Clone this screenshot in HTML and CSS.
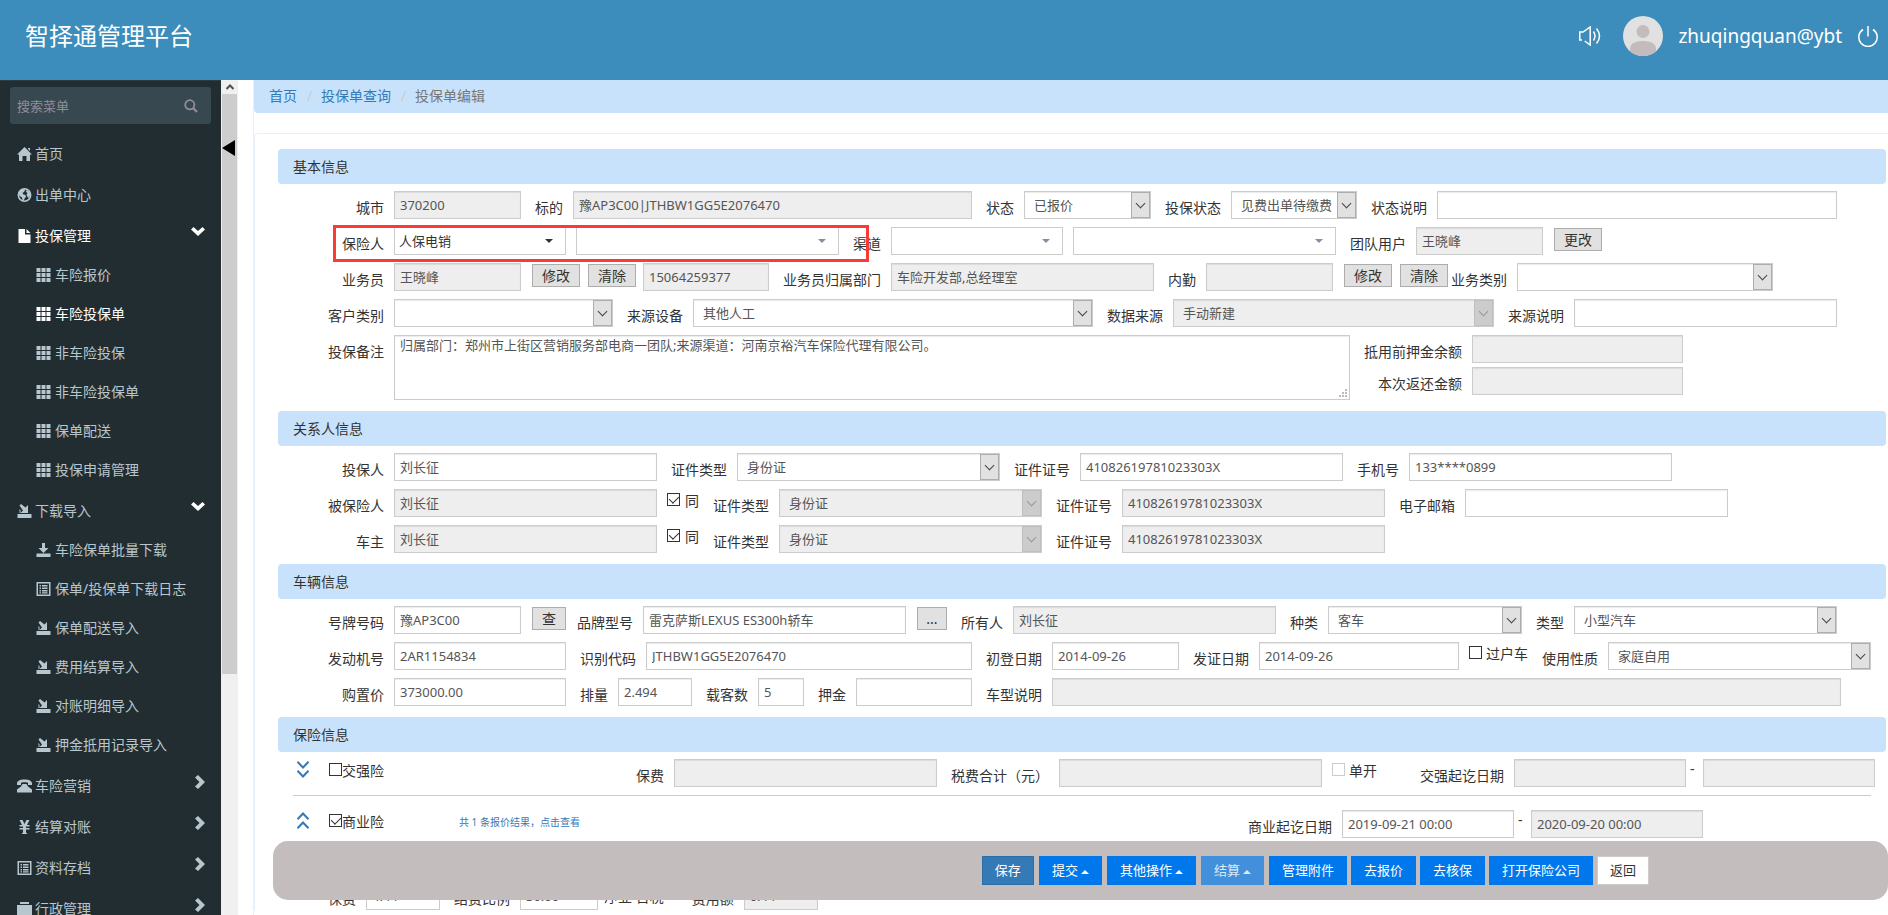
FILE: index.html
```html
<!DOCTYPE html>
<html lang="zh-CN">
<head>
<meta charset="utf-8">
<title>智择通管理平台</title>
<link rel="stylesheet" href="styles.css">
</head>
<body>
<svg class="sprite" aria-hidden="true">
  <symbol id="i-home" viewBox="0 0 15 14"><path d="M7.500 0L15 7.500h-2V14H9.500V9h-4v5H2V7.500H0L7.500 0zM11 1h2v3l-2-2z"/></symbol>
  <symbol id="i-globe" viewBox="0 0 14 14"><circle cx="7" cy="7" r="6.200" fill="none" stroke="currentColor" stroke-width="1.500"/><path d="M2 3l3-2 3 .5L6.500 4 5 5l1 1.500 2 .5.5 2L7 10.500 6.500 13 5 12 4.500 9.500 2 8 1 5zM9 2l3 2 .8 3-1.300 3-1.500-1L9 6.500 10 5 8.500 4z"/></symbol>
  <symbol id="i-file" viewBox="0 0 12 14"><path d="M0 0h6.500v5.500H12V14H0zM8 0l4 4H8z"/></symbol>
  <symbol id="i-grid" viewBox="0 0 14 14"><path d="M0 0h4v4H0zM5 0h4v4H5zM10 0h4v4h-4zM0 5h4v4H0zM5 5h4v4H5zM10 5h4v4h-4zM0 10h4v4H0zM5 10h4v4H5zM10 10h4v4h-4z"/></symbol>
  <symbol id="i-import" viewBox="0 0 14 14"><path d="M0 10h14v4H0zM2 1.500L3.500 0l4.500 3.500L10.500 1v8H3l2.500-2.500zM2 5v4h1V6z"/></symbol>
  <symbol id="i-download" viewBox="0 0 14 14"><path d="M5.500 0h3v5H12L7 10 2 5h3.500zM0 10.500h14V14H0z"/></symbol>
  <symbol id="i-list" viewBox="0 0 14 14"><path fill-rule="evenodd" d="M0 0h14v14H0zM1.500 1.500v11h11v-11zM3 3h1.500v1.500H3zM5.500 3H11v1.500H5.500zM3 5.500h1.500V7H3zM5.500 5.500H11V7H5.500zM3 8h1.500v1.500H3zM5.500 8H11v1.500H5.500zM3 10.200h1.500v1.300H3zM5.500 10.200H11v1.300H5.500z"/></symbol>
  <symbol id="i-phone" viewBox="0 0 15 13"><path d="M0 4C0 1.500 3 0 7.500 0S15 1.500 15 4v1.500h-4V3.200C9 2.600 6 2.600 4 3.200v2.300H0zM5.500 4.500h4L11 7l4 3v3H0v-3l4-3z"/></symbol>
  <symbol id="i-yen" viewBox="0 0 12 14"><path d="M1 0h3l2 4 2-4h3L8.500 5H11v1.500H7.500v1.500H11v1.500H7.500v3L9 14H3l1.500-1.500v-3H1V8h3.500V6.500H1V5h2.500z"/></symbol>
  <symbol id="i-case" viewBox="0 0 15 14"><path d="M3 0h9v2H3zM0 3h15v11H0z"/></symbol>
  <symbol id="i-search" viewBox="0 0 14 14"><circle cx="5.800" cy="5.800" r="4.600" fill="none" stroke="currentColor" stroke-width="1.800"/><path d="M9 9l4 4" stroke="currentColor" stroke-width="2.200"/></symbol>
  <symbol id="i-down" viewBox="0 0 14 9"><path d="M2.500 0L7 4l4.500-4L14 2.500 7 9 0 2.500z"/></symbol>
  <symbol id="i-right" viewBox="0 0 10 14"><path d="M3 0l7 7-7 7-3-2.500L4.500 7 0 2.500z"/></symbol>
  <symbol id="i-double" viewBox="0 0 12 17"><path d="M.5.800L6 6.500 11.500.800M.500 9.800L6 15.500l5.500-5.700" fill="none" stroke="currentColor" stroke-width="2"/></symbol>
</svg>

<header class="header">
  <h1 class="brand">智择通管理平台</h1>
  <div class="account">
    <svg class="speaker" viewBox="0 0 22 20"><path d="M3 14H.8V6H4l7.200-5v18l-5.500-4M14.500 5.500q3 4.500 0 9M17.500 2.500q6 7.500 0 15" fill="none" stroke="#fff" stroke-width="1.500"/></svg>
    <svg class="avatar" viewBox="0 0 40 40"><clipPath id="round"><circle cx="20" cy="20" r="20"/></clipPath><g clip-path="url(#round)"><path fill="#e1e1e1" d="M0 0h40v40H0z"/><circle cx="20" cy="15.500" r="6.500" fill="#c4bcbc"/><path fill="#c4bcbc" d="M7 40v-7q0-8 13-8t13 8v7z"/></g></svg>
    <span class="user">zhuqingquan@ybt</span>
    <svg class="power" viewBox="0 0 20 21"><path d="M5 3.500a9.200 9.200 0 1 0 10 0M10 0v10.500" fill="none" stroke="#fff" stroke-width="1.500"/></svg>
  </div>
</header>

<div class="page">
  <aside class="sidebar">
    <form class="search">
      <input type="text" placeholder="搜索菜单" aria-label="搜索菜单">
      <button type="button" aria-label="搜索"><svg><use href="#i-search"/></svg></button>
    </form>
    <nav class="menu">
      <a href="#"><svg class="ic"><use href="#i-home"/></svg>首页</a>
      <a href="#"><svg class="ic"><use href="#i-globe"/></svg>出单中心</a>
      <a href="#" class="head on"><svg class="ic"><use href="#i-file"/></svg>投保管理<svg class="arrow"><use href="#i-down"/></svg></a>
      <div class="sub">
        <a href="#"><svg class="ic"><use href="#i-grid"/></svg>车险报价</a>
        <a href="#" class="on"><svg class="ic"><use href="#i-grid"/></svg>车险投保单</a>
        <a href="#"><svg class="ic"><use href="#i-grid"/></svg>非车险投保</a>
        <a href="#"><svg class="ic"><use href="#i-grid"/></svg>非车险投保单</a>
        <a href="#"><svg class="ic"><use href="#i-grid"/></svg>保单配送</a>
        <a href="#"><svg class="ic"><use href="#i-grid"/></svg>投保申请管理</a>
      </div>
      <a href="#" class="head"><svg class="ic"><use href="#i-import"/></svg>下载导入<svg class="arrow"><use href="#i-down"/></svg></a>
      <div class="sub">
        <a href="#"><svg class="ic"><use href="#i-download"/></svg>车险保单批量下载</a>
        <a href="#"><svg class="ic"><use href="#i-list"/></svg>保单/投保单下载日志</a>
        <a href="#"><svg class="ic"><use href="#i-import"/></svg>保单配送导入</a>
        <a href="#"><svg class="ic"><use href="#i-import"/></svg>费用结算导入</a>
        <a href="#"><svg class="ic"><use href="#i-import"/></svg>对账明细导入</a>
        <a href="#"><svg class="ic"><use href="#i-import"/></svg>押金抵用记录导入</a>
      </div>
      <a href="#"><svg class="ic"><use href="#i-phone"/></svg>车险营销<svg class="arrow"><use href="#i-right"/></svg></a>
      <a href="#"><svg class="ic"><use href="#i-yen"/></svg>结算对账<svg class="arrow"><use href="#i-right"/></svg></a>
      <a href="#"><svg class="ic"><use href="#i-list"/></svg>资料存档<svg class="arrow"><use href="#i-right"/></svg></a>
      <a href="#"><svg class="ic"><use href="#i-case"/></svg>行政管理<svg class="arrow"><use href="#i-right"/></svg></a>
    </nav>
  </aside>
  <div class="scrollbar">
    <svg class="up" viewBox="0 0 8 6"><path d="M.5 5L4 1.500 7.500 5" fill="none" stroke="#505050" stroke-width="2"/></svg>
    <div class="thumb"></div>
    <button type="button" class="collapse" aria-label="收起菜单"></button>
  </div>

  <main class="main">
    <nav class="crumbs">
      <a href="#">首页</a><i>/</i><a href="#">投保单查询</a><i>/</i><span>投保单编辑</span>
    </nav>
    <form class="panel">
      <h2 class="bar">基本信息</h2>
      <div class="rows">
        <div class="row">
          <label for="city">城市</label><input id="city" class="w1" value="370200" readonly>
          <label for="subject">标的</label><input id="subject" class="w-subject" value="豫AP3C00|JTHBW1GG5E2076470" readonly>
          <label for="state">状态</label><span class="select w1"><select id="state"><option>已报价</option></select></span>
          <label for="istate">投保状态</label><span class="select w-short"><select id="istate"><option>见费出单待缴费</option></select></span>
          <label for="snote">状态说明</label><input id="snote" class="w4">
        </div>
        <div class="row">
          <label for="insurer">保险人</label><span class="combo w2 dark"><select id="insurer"><option>人保电销</option></select></span>
          <span class="combo w3"><select aria-label="保险人机构"><option></option></select></span>
          <label for="channel">渠道</label><span class="combo w2"><select id="channel"><option></option></select></span>
          <span class="combo w3"><select aria-label="渠道机构"><option></option></select></span>
          <label for="team">团队用户</label><input id="team" class="w1" value="王晓峰" readonly>
          <button type="button">更改</button>
          <div class="marker"></div>
        </div>
        <div class="row">
          <label for="agent">业务员</label><input id="agent" class="w1" value="王晓峰" readonly>
          <button type="button">修改</button><button type="button">清除</button>
          <input class="w-short" aria-label="业务员电话" value="15064259377" readonly>
          <label for="dept">业务员归属部门</label><input id="dept" class="w3" value="车险开发部,总经理室" readonly>
          <label for="clerk">内勤</label><input id="clerk" class="w1" readonly>
          <button type="button">修改</button><button type="button">清除</button>
          <label for="btype" class="snug">业务类别</label><span class="select w-btype"><select id="btype"><option></option></select></span>
        </div>
        <div class="row">
          <label for="ctype">客户类别</label><span class="select w-ctype"><select id="ctype"><option></option></select></span>
          <label for="device">来源设备</label><span class="select w4"><select id="device"><option>其他人工</option></select></span>
          <label for="source">数据来源</label><span class="select w-source"><select id="source" disabled><option>手动新建</option></select></span>
          <label for="srcnote">来源说明</label><input id="srcnote" class="w3">
        </div>
        <div class="row">
          <label for="remark">投保备注</label><textarea id="remark">归属部门：郑州市上街区营销服务部电商一团队;来源渠道：河南京裕汽车保险代理有限公司。</textarea>
          <div class="stack">
            <div class="row"><label for="dep1">抵用前押金余额</label><input id="dep1" class="w-dep" readonly></div>
            <div class="row"><label for="dep2">本次返还金额</label><input id="dep2" class="w-dep" readonly></div>
          </div>
        </div>
      </div>

      <h2 class="bar">关系人信息</h2>
      <div class="rows">
        <div class="row">
          <label for="holder">投保人</label><input id="holder" class="w3" value="刘长征">
          <label for="hct">证件类型</label><span class="select w3"><select id="hct"><option>身份证</option></select></span>
          <label for="hcn">证件证号</label><input id="hcn" class="w3" value="41082619781023303X">
          <label for="mobile">手机号</label><input id="mobile" class="w3" value="133****0899">
        </div>
        <div class="row">
          <label for="insured">被保险人</label><input id="insured" class="w3" value="刘长征" readonly>
          <span class="check same"><input type="checkbox" id="same1" checked><label for="same1">同</label></span>
          <label for="ict">证件类型</label><span class="select w3"><select id="ict" disabled><option>身份证</option></select></span>
          <label for="icn">证件证号</label><input id="icn" class="w3" value="41082619781023303X" readonly>
          <label for="email">电子邮箱</label><input id="email" class="w3">
        </div>
        <div class="row">
          <label for="owner">车主</label><input id="owner" class="w3" value="刘长征" readonly>
          <span class="check same"><input type="checkbox" id="same2" checked><label for="same2">同</label></span>
          <label for="oct">证件类型</label><span class="select w3"><select id="oct" disabled><option>身份证</option></select></span>
          <label for="ocn">证件证号</label><input id="ocn" class="w3" value="41082619781023303X" readonly>
        </div>
      </div>

      <h2 class="bar">车辆信息</h2>
      <div class="rows">
        <div class="row">
          <label for="plate">号牌号码</label><input id="plate" class="w1" value="豫AP3C00">
          <button type="button" class="lookup">查</button>
          <label for="model" class="tight">品牌型号</label><input id="model" class="w3" value="雷克萨斯LEXUS ES300h轿车">
          <button type="button" class="more">...</button>
          <label for="own">所有人</label><input id="own" class="w3" value="刘长征" readonly>
          <label for="kind">种类</label><span class="select w-kind"><select id="kind"><option>客车</option></select></span>
          <label for="type">类型</label><span class="select w3"><select id="type"><option>小型汽车</option></select></span>
        </div>
        <div class="row">
          <label for="engine">发动机号</label><input id="engine" class="w2" value="2AR1154834">
          <label for="vin">识别代码</label><input id="vin" class="w-vin" value="JTHBW1GG5E2076470">
          <label for="reg">初登日期</label><input id="reg" class="w1" value="2014-09-26">
          <label for="issue">发证日期</label><input id="issue" class="w-issue" value="2014-09-26">
          <span class="check"><input type="checkbox" id="transfer"><label for="transfer">过户车</label></span>
          <label for="usage">使用性质</label><span class="select w3"><select id="usage"><option>家庭自用</option></select></span>
        </div>
        <div class="row">
          <label for="price">购置价</label><input id="price" class="w2" value="373000.00">
          <label for="disp">排量</label><input id="disp" class="w0" value="2.494">
          <label for="seats">载客数</label><input id="seats" class="w-seats" value="5">
          <label for="deposit">押金</label><input id="deposit" class="w-deposit">
          <label for="mnote">车型说明</label><input id="mnote" class="w-mnote" readonly>
        </div>
      </div>

      <h2 class="bar">保险信息</h2>
      <div class="cover">
        <div class="row">
          <div class="lead">
            <a href="#" class="fold" aria-label="展开"><svg><use href="#i-double"/></svg></a>
            <span class="check"><input type="checkbox" id="ctp"><label for="ctp">交强险</label></span>
          </div>
          <label for="prem">保费</label><input id="prem" class="w3" readonly>
          <label for="tax">税费合计（元）</label><input id="tax" class="w3" readonly>
          <span class="check single"><input type="checkbox" id="single" disabled><label for="single">单开</label></span>
          <label for="c1">交强起讫日期</label><input id="c1" class="w2" readonly><span class="dash">-</span><input class="w2" aria-label="交强止期" readonly>
        </div>
        <hr>
        <div class="row">
          <div class="lead long">
            <a href="#" class="fold up" aria-label="收起"><svg><use href="#i-double"/></svg></a>
            <span class="check"><input type="checkbox" id="com" checked><label for="com">商业险</label></span>
            <a href="#" class="quote">共 1 条报价结果，点击查看</a>
          </div>
          <label for="b1">商业起讫日期</label><input id="b1" class="w2" value="2019-09-21 00:00"><span class="dash">-</span><input class="w2" aria-label="商业止期" value="2020-09-20 00:00" readonly>
        </div>
        <div class="row fees">
          <label for="fee1">保费</label><input id="fee1" class="w0" value="4.44">
          <label for="fee2">结费比例</label><input id="fee2" class="w-rate" value="30.00">
          <span class="note">净业 含税</span>
          <label for="fee3">费用额</label><input id="fee3" class="w0" value="0.44" readonly>
        </div>
      </div>
    </form>
  </main>
</div>

<div class="actions">
  <button type="button" class="save">保存</button>
  <button type="button">提交<i class="caret"></i></button>
  <button type="button">其他操作<i class="caret"></i></button>
  <button type="button" disabled>结算<i class="caret"></i></button>
  <div class="plain">
    <button type="button">管理附件</button>
    <button type="button">去报价</button>
    <button type="button">去核保</button>
    <button type="button">打开保险公司</button>
    <button type="button" class="back">返回</button>
  </div>
</div>
</body>
</html>
```

FILE: styles.css
```css
* { box-sizing: border-box; }
body {
  margin: 0;
  height: 100vh;
  overflow: hidden;
  display: flex;
  flex-direction: column;
  background: #fff;
  color: #333;
  font: 14px/20px "Noto Sans", "Noto Sans CJK SC", sans-serif;
}
a { color: #337ab7; text-decoration: none; }
button, input, select, textarea { font: inherit; margin: 0; }
.sprite { position: absolute; width: 0; height: 0; }
use { fill: currentColor; }

/* Header */
.header {
  flex: none;
  height: 80px;
  display: flex;
  justify-content: space-between;
  align-items: flex-start;
  padding: 16px 10px 0 25px;
  background: #3c8dbc;
  color: #fff;
}
.brand { margin: 0; font-size: 24px; line-height: 40px; font-weight: 400; }
.account { display: flex; align-items: center; line-height: 40px; }
.speaker { width: 22px; height: 20px; margin-right: 22px; }
.avatar { width: 40px; height: 40px; margin-right: 15px; }
.user { font-size: 19px; margin-right: 16px; }
.power { width: 20px; height: 21px; }

/* Sidebar */
.page { flex: 1; min-height: 0; display: flex; }
.sidebar {
  flex: none;
  width: 221px;
  overflow: hidden;
  background: #222d32;
  border-top: 1px solid #2e3b42;
}
.search {
  display: flex;
  align-items: center;
  height: 37px;
  margin: 6px 10px 10px;
  padding: 0 13px 0 7px;
  border-radius: 3px;
  background: #374850;
}
.search input {
  flex: 1;
  min-width: 0;
  padding: 0;
  border: 0;
  outline: 0;
  background: none;
  color: #fff;
  font-size: 13px;
}
.search input::placeholder { color: #928c9c; }
.search button { padding: 0; border: 0; background: none; color: #928c9c; line-height: 0; }
.search svg { width: 14px; height: 14px; }
.menu a {
  display: flex;
  align-items: center;
  height: 41px;
  padding: 0 16px 2px 17px;
  color: #b8c7ce;
}
.menu a.head { height: 40px; padding-bottom: 0; }
.menu a.on { color: #fff; }
.menu .ic { width: 15px; height: 14px; margin-right: 3px; }
.menu .arrow { width: 10px; height: 14px; margin: 0 0 8px auto; }
.menu .head .arrow { width: 14px; height: 9px; margin-bottom: 10px; color: #fff; }
.menu .sub { padding-bottom: 1px; }
.menu .sub a { height: 39px; padding-left: 36px; }
.menu .sub .ic { margin-right: 4px; }
.scrollbar {
  position: relative;
  flex: none;
  width: 17px;
  padding: 0 1px;
  background: #f0f0f0;
}
.scrollbar .up { display: block; width: 8px; height: 6px; margin: 4px auto; }
.scrollbar .thumb { height: 580px; background: #cdcdcd; }
.collapse {
  position: absolute;
  left: 1px;
  top: 60px;
  width: 13px;
  height: 16px;
  padding: 0;
  border: 0;
  background: #000;
  clip-path: polygon(100% 0, 100% 100%, 0 50%);
}

/* Content */
.main {
  flex: 1;
  min-width: 0;
  margin-left: 15px;
  overflow: hidden;
  border-left: 1px solid #e4f1fd;
}
.crumbs {
  display: flex;
  gap: 10px;
  height: 33px;
  padding: 6px 15px;
  border-radius: 0 0 0 4px;
  background: #c9e2fb;
  color: #777;
}
.crumbs i { color: #ccc; width: 4px; font-style: normal; }
.panel {
  margin-top: 20px;
  padding: 15px 2px 0 23px;
  border: solid #e8f2fb;
  border-width: 1px 0 0 1px;
  border-radius: 4px 0 0 0;
}
.bar {
  margin: 0;
  height: 35px;
  padding: 0 15px;
  border-radius: 4px;
  background: #c9e2fb;
  font-size: 14px;
  font-weight: 400;
  line-height: 36px;
}
.rows { display: grid; gap: 8px; padding: 7px 0 11px; }
.cover { padding-top: 7px; }
.row { position: relative; display: flex; align-items: flex-start; }
.row > label { flex: none; margin: 7px 10px -7px 14px; white-space: nowrap; }
.rows > .row > label:first-child { width: 106px; margin-left: 0; text-align: right; }
.row > label.snug { margin-left: 3px; }
.row > label.tight { margin-left: 11px; }

.row > input, .select, .combo { flex: 0 1 auto; height: 28px; }
.row > input, .row textarea, .select select, .combo select {
  padding: 0 5px 1px;
  border: 1px solid #ccc;
  border-radius: 0;
  outline: 0;
  background: #fff;
  color: #555;
  font-size: 13px;
  box-shadow: inset 0 1px 1px rgba(0, 0, 0, .08);
}
.row > input:read-only, .select select:disabled { background: #eee; opacity: 1; }
.row textarea { flex: 0 1 956px; height: 65px; line-height: 18px; resize: both; }
.row textarea::-webkit-resizer {
  background:
    linear-gradient(#bbb, #bbb) 11px 5px / 2px 2px,
    linear-gradient(#bbb, #bbb) 8px 8px / 2px 2px,
    linear-gradient(#bbb, #bbb) 11px 8px / 2px 2px,
    linear-gradient(#bbb, #bbb) 5px 11px / 2px 2px,
    linear-gradient(#bbb, #bbb) 8px 11px / 2px 2px,
    linear-gradient(#bbb, #bbb) 11px 11px / 2px 2px;
  background-repeat: no-repeat;
}
.stack { display: grid; gap: 4px; }
.stack .row { justify-content: flex-end; }

.select, .combo { position: relative; display: block; min-width: 0; }
.select select, .combo select {
  display: block;
  width: 100%;
  height: 100%;
  appearance: none;
}
.select select { padding: 0 18px 1px 9px; }
.select::before, .select::after, .combo::after {
  content: "";
  position: absolute;
  pointer-events: none;
}
.select::before {
  top: 1px;
  right: 1px;
  bottom: 1px;
  width: 17px;
  border: 1px solid #adadad;
  background: #e1e1e1;
}
.select::after {
  top: 9px;
  right: 7px;
  width: 6px;
  height: 6px;
  border: solid #444;
  border-width: 0 1px 1px 0;
  transform: rotate(45deg);
}
.select:has(:disabled)::before { background: #ccc; border-color: #bfbfbf; }
.select:has(:disabled)::after { border-color: #999; }
.combo + .combo { margin-left: 10px; }
.combo select { padding: 0 24px 1px 4px; color: #333; box-shadow: none; }
.combo::after {
  top: 12px;
  right: 13px;
  border: 4px solid transparent;
  border-top-color: #8c8ca0;
  border-bottom: 0;
}
.combo.dark::after { border-top-color: #333; }

.w0 { width: 74px; }
.w1 { width: 127px; }
.w2 { width: 172px; }
.w3 { width: 263px; }
.w4 { width: 400px; }
.w-short { width: 126px; }
.w-subject { width: 399px; }
.w-btype { width: 256px; }
.w-ctype { width: 219px; }
.w-source { width: 321px; }
.w-dep { width: 211px; }
.w-kind { width: 194px; }
.w-vin { width: 326px; }
.w-issue { width: 200px; }
.w-seats { width: 46px; }
.w-deposit { width: 116px; }
.w-mnote { width: 789px; }
.w-rate { width: 78px; }

.row > button {
  flex: none;
  width: 48px;
  height: 23px;
  margin: 1px 0 0 11px;
  padding: 0;
  border: 1px solid #adadad;
  background: #e1e1e1;
  color: #333;
  line-height: 20px;
}
.row > button.lookup { width: 34px; }
.row > button.more { width: 30px; }
.row > button + button { margin-left: 8px; }
.row > button + input { margin-left: 7px; }

.check { flex: none; display: flex; gap: 4px; margin-left: 10px; line-height: 24px; }
.check.same { gap: 5px; }
.check input {
  position: relative;
  width: 13px;
  height: 13px;
  margin-top: 4px;
  appearance: none;
  border: 1px solid #333;
  background: #fff;
}
.check input:disabled { border-color: #ccc; }
.check input:checked::after {
  content: "";
  position: absolute;
  left: 3px;
  top: 0;
  width: 5px;
  height: 8px;
  border: solid #333;
  border-width: 0 1px 1px 0;
  transform: rotate(45deg);
}
.check.single { margin-right: 29px; }

.marker {
  position: absolute;
  left: 55px;
  top: -2px;
  width: 536px;
  height: 37px;
  border: 3px solid #f93a37;
  pointer-events: none;
}

.lead { flex: none; display: flex; width: 344px; padding-left: 19px; }
.lead.long { width: 956px; }
.fold { width: 12px; height: 17px; margin: 2px 20px 0 0; }
.fold svg { display: block; width: 12px; height: 17px; }
.fold use { fill: none; }
.fold.up { transform: scaleY(-1); }
.lead .check { gap: 0; margin: 0; }
.quote { margin-left: 75px; font-size: 10px; line-height: 24px; }
.dash { flex: none; width: 17px; padding-left: 4px; }
hr { height: 1px; margin: 8px 15px 14px; border: 0; background: #d3c8c8; }
.fees { margin-top: 44px; padding-left: 36px; }
.note { margin: 5px 14px 0 6px; white-space: nowrap; }

/* Action bar */
.actions {
  position: fixed;
  left: 273px;
  right: 0;
  bottom: 15px;
  display: flex;
  justify-content: flex-end;
  gap: 5px;
  padding: 15px 239px 15px 15px;
  border-radius: 15px;
  background: #c4bdbd;
}
.plain { display: flex; gap: 4px; }
.actions button {
  height: 29px;
  padding: 0 12px;
  border: 1px solid #0078eb;
  background: #0078eb;
  color: #fff;
  font-size: 13px;
  line-height: 27px;
}
.actions .save { background: #337ab7; border-color: #2e6da4; }
.actions button:disabled { background: #4290dc; border-color: #4290dc; color: #dcebf8; }
.actions .back { background: #fff; border-color: #ccc; color: #333; }
.caret {
  display: inline-block;
  margin-left: 3px;
  border: 4px solid transparent;
  border-top: 0;
  border-bottom-color: currentColor;
  vertical-align: 1px;
}
```
